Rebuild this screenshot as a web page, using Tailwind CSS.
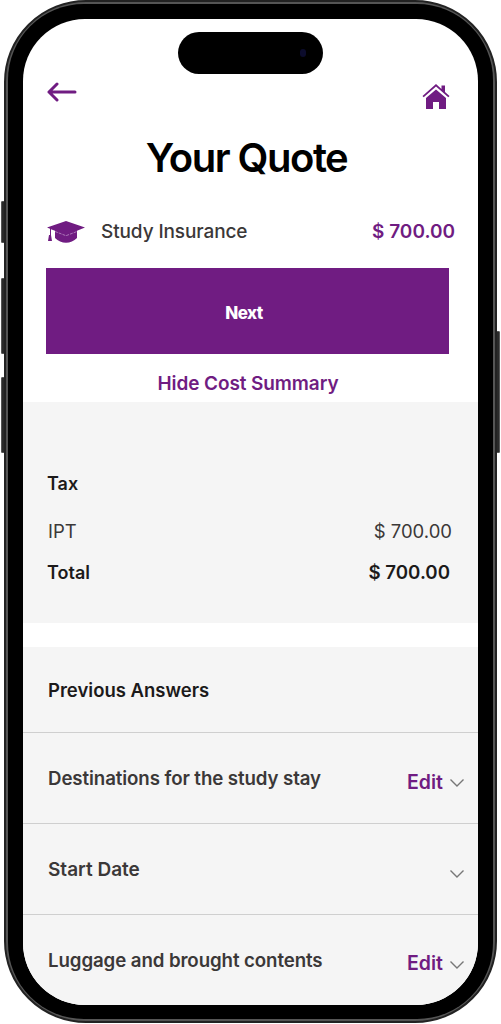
<!DOCTYPE html>
<html lang="en">
  <head>
    <meta charset="UTF-8" />
    <meta name="viewport" content="width=device-width, initial-scale=1.0" />
    <title>Your Quote</title>
    <script src="https://cdn.jsdelivr.net/npm/@tailwindcss/browser@4"></script>
  </head>

  <body class="bg-white font-['Inter',sans-serif]">
    <div class="relative w-[501px] h-[1024px] bg-white overflow-hidden">

      <!-- side buttons -->
      <div class="absolute left-[1px] top-[201px] w-[4px] h-[42px] bg-[#2a2a2a] rounded-l-[1px] border border-[#555]"></div>
      <div class="absolute left-[1px] top-[278px] w-[4px] h-[76px] bg-[#2a2a2a] rounded-l-[1px] border border-[#555]"></div>
      <div class="absolute left-[1px] top-[377px] w-[4px] h-[76px] bg-[#2a2a2a] rounded-l-[1px] border border-[#555]"></div>
      <div class="absolute right-[1px] top-[331px] w-[4px] h-[122px] bg-[#2a2a2a] rounded-r-[1px] border border-[#555]"></div>

      <!-- phone frame -->
      <div class="absolute left-[4px] top-0 w-[493px] h-[1023px] rounded-[82px] bg-[#555] border-2 border-[#222] p-[2px]">
        <div class="w-full h-full rounded-[76px] bg-black pt-[15px] pb-[14px] pl-[15px] pr-[15px]">

          <!-- screen -->
          <div class="relative w-full h-full rounded-[62px] bg-white overflow-hidden">

            <!-- dynamic island -->
            <div class="absolute left-[155px] top-[13px] w-[145px] h-[42px] rounded-full bg-black flex items-center justify-end pr-[17px]">
              <div class="w-[6px] h-[8px] rounded-full bg-[#0c0c2c]"></div>
            </div>

            <!-- top bar -->
            <div class="h-[89px] flex justify-between items-start pl-[24px] pr-[28px] pt-[60px]">
              <svg class="w-[30px] h-[24px] mt-[1px]" viewBox="0 0 30 24" fill="none" stroke="#701c82" stroke-width="3" stroke-linecap="round" stroke-linejoin="round">
                <path d="M28 12H2M10 4L2 12l8 8" />
              </svg>
              <svg class="w-[28px] h-[25px] mt-[5px]" viewBox="0 0 28 25" fill="#701c82">
                <path d="M14 5.500L4 14v11h7v-7h6v7h7V14z" />
                <path d="M14 0L0.500 12l1.200 1.300L14 2.600l12.300 10.700 1.200-1.300L23 8V1.500h-3.500v3.400z" />
              </svg>
            </div>

            <h1 class="h-[72px] mt-[14px] pr-[8px] flex justify-center items-center text-[40px] font-semibold tracking-[-1.500px] text-black">Your Quote</h1>

            <!-- product row -->
            <div class="mt-[16px] h-[44px] flex items-center justify-between pl-[24px] pr-[23px]">
              <div class="flex items-center gap-[16px]">
                <svg class="w-[38px] h-[22px]" viewBox="0 0 38 22" fill="#701c82">
                  <path d="M19 0L0 6.500l3 1.200v6.300H2L1 20h4l-1-6V8.200l4 1.500V17c3 3 7 4.800 11 4.800S27 20 30 17V9.700l8-3.200z" />
                  <path d="M8 10.500l11 4.200 11-4.200" fill="none" stroke="#b98cc4" stroke-width="0.800" stroke-dasharray="3 1" />
                </svg>
                <span class="text-[19px] font-medium text-[#3b3838] tracking-[-0.1px]">Study Insurance</span>
              </div>
              <span class="text-[19px] font-semibold text-[#701c82]">$ 700.00</span>
            </div>

            <!-- next -->
            <div class="mt-[14px] ml-[23px] w-[403px] h-[86px] bg-[#701c82] flex items-center justify-center pr-[7px] pt-[6px] text-[17px] font-extrabold text-white tracking-[-0.5px]">Next</div>

            <div class="h-[48px] pt-[13px] pr-[5px] flex items-center justify-center text-[19px] font-semibold text-[#701c82] tracking-[-0.1px]">Hide Cost Summary</div>

            <!-- cost summary -->
            <div class="h-[221px] bg-[#f5f5f5] pt-[69px] pl-[24px] pr-[26px]">
              <div class="text-[18px] font-semibold text-[#1c1a1a] leading-[26px]">Tax</div>
              <div class="mt-[21px] pl-[1px] flex justify-between text-[18.500px] text-[#3b3838] leading-[26px]">
                <span>IPT</span>
                <span>$ 700.00</span>
              </div>
              <div class="mt-[16px] pr-[2px] flex justify-between text-[18.700px] font-semibold text-[#1c1a1a] leading-[26px]">
                <span class="text-[18px]">Total</span>
                <span>$ 700.00</span>
              </div>
            </div>

            <!-- previous answers -->
            <div class="mt-[24px] bg-[#f5f5f5] h-[400px]">
              <div class="h-[86px] pt-[30px] pl-[25px] text-[18.500px] font-semibold text-[#1c1a1a] leading-[26px] border-b border-[#cfcfcf]">Previous Answers</div>

              <div class="h-[91px] flex justify-between pl-[25px] pr-[14px] pt-[33px] border-b border-[#cfcfcf]">
                <span class="text-[18.700px] font-semibold text-[#3b3838] leading-[26px] tracking-[-0.1px]">Destinations for the study stay</span>
                <div class="flex items-start gap-[7px] mt-[3px]">
                  <span class="text-[19.500px] font-semibold text-[#701c82] leading-[26px]">Edit</span>
                  <svg class="w-[14px] h-[8px] mt-[10px]" viewBox="0 0 14 8" fill="none" stroke="#777" stroke-width="1.400"><path d="M0.500 0.500L7 7l6.500-6.500" /></svg>
                </div>
              </div>

              <div class="h-[91px] flex justify-between pl-[25px] pr-[14px] pt-[33px] border-b border-[#cfcfcf]">
                <span class="text-[19px] font-semibold text-[#3b3838] leading-[26px]">Start Date</span>
                <svg class="w-[14px] h-[8px] mt-[13px]" viewBox="0 0 14 8" fill="none" stroke="#777" stroke-width="1.400"><path d="M0.500 0.500L7 7l6.500-6.500" /></svg>
              </div>

              <div class="flex justify-between pl-[25px] pr-[14px] pt-[33px]">
                <span class="text-[18.700px] font-semibold text-[#3b3838] leading-[26px] tracking-[-0.1px]">Luggage and brought contents</span>
                <div class="flex items-start gap-[7px] mt-[2px]">
                  <span class="text-[19.500px] font-semibold text-[#701c82] leading-[26px]">Edit</span>
                  <svg class="w-[14px] h-[8px] mt-[11px]" viewBox="0 0 14 8" fill="none" stroke="#777" stroke-width="1.400"><path d="M0.500 0.500L7 7l6.500-6.500" /></svg>
                </div>
              </div>
            </div>

          </div>
        </div>
      </div>
    </div>
  </body>
</html>
